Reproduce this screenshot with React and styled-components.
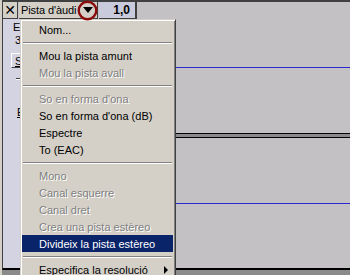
import React from "react";
import styled, { createGlobalStyle } from "styled-components";

const GlobalStyle = createGlobalStyle`
  html, body {
    margin: 0;
    padding: 0;
    background: #d4d0c8;
  }
  body {
    font-family: "Liberation Sans", Arial, sans-serif;
    font-size: 11px;
  }
`;

const Window = styled.div`
  position: relative;
  width: 350px;
  height: 275px;
  overflow: hidden;
  background: #d4d0c8;
  display: flex;
  flex-direction: column;
  padding-left: 2px;
  box-sizing: border-box;
`;

const Track = styled.div`
  display: flex;
  height: 270px;
  flex-shrink: 0;
  border-top: 2px solid #404040;
  border-left: 1px solid #404040;
  border-bottom: 2px solid #000;
  box-sizing: border-box;
`;

const Under = styled.div`
  flex: 1;
  background: #8a8a8a;
`;

const Label = styled.div`
  width: 133px;
  flex-shrink: 0;
  display: flex;
  flex-direction: column;
  background: #d3d3e2;
  border-right: 1px solid #404040;
`;

const TitleBar = styled.div`
  display: flex;
  height: 17px;
  gap: 1px;
  background: #c6c3c6;
`;

const Bevel = styled.div`
  box-sizing: border-box;
  display: flex;
  align-items: center;
  background: ${(p) => p.$bg || "#d4d0c8"};
  border-right: 1px solid #404040;
  border-bottom: 1px solid #404040;
  color: #000;
`;

const CloseBox = styled(Bevel)`
  width: 15px;
  justify-content: center;
  font-size: 14px;
  font-family: "DejaVu Sans", sans-serif;
`;

const TitleBox = styled(Bevel)`
  width: 79px;
  padding-left: 2px;
  font-size: 11px;
  letter-spacing: -0.1px;
  white-space: nowrap;
`;

const Caret = styled.svg`
  margin-left: auto;
  margin-right: 4px;
  flex-shrink: 0;
`;

const RateBox = styled(Bevel)`
  width: 37px;
  justify-content: flex-end;
  padding-right: 5px;
  font-size: 12px;
  font-weight: bold;
`;

const LabelBody = styled.div`
  display: flex;
  flex-direction: column;
  padding: 2px 0 0 10px;
`;

const InfoLine = styled.div`
  line-height: 13px;
  padding-left: ${(p) => p.$indent || 0}px;
  white-space: nowrap;
`;

const ButtonRow = styled.div`
  display: flex;
  gap: 6px;
  margin-top: 6px;
  margin-left: -2px;
`;

const SmallButton = styled.div`
  height: 15px;
  box-sizing: border-box;
  padding: 0 3px;
  display: flex;
  align-items: center;
  text-decoration: underline;
  border-left: 1px solid #fff;
  border-top: 1px solid #fff;
  border-right: 1px solid #404040;
  border-bottom: 1px solid #404040;
`;

const SliderTrack = styled.div`
  margin-top: ${(p) => p.$top}px;
  margin-left: 3px;
  width: 100px;
  height: 0;
  border-top: 1px solid #404040;
  border-bottom: 1px solid #fff;
`;

const PanLabel = styled.div`
  margin-top: 26px;
  margin-left: 4px;
  text-decoration: underline;
  line-height: 13px;
`;

const Waves = styled.div`
  flex: 1;
  display: flex;
  flex-direction: column;
`;

const Channel = styled.div`
  height: ${(p) => (p.$h ? `${p.$h}px` : "auto")};
  flex: ${(p) => (p.$h ? "none" : 1)};
  display: flex;
  align-items: center;
  background: #c4c1c5;
`;

const ZeroLine = styled.div`
  flex: 1;
  height: 1px;
  background: #2b2bd6;
`;

const ChannelGap = styled.div`
  height: 5px;
  box-sizing: border-box;
  background: #8a8a8a;
  border-top: 1px solid #000;
  border-bottom: 1px solid #000;
`;

const Menu = styled.div`
  position: absolute;
  left: 20px;
  top: 19px;
  width: 156px;
  box-sizing: border-box;
  padding: 1px 2px 1px 1px;
  background: #d4d0c8;
  border: 1px solid;
  border-color: #d4d0c8 #404040 #404040 #d4d0c8;
  box-shadow: inset 1px 1px #fff, inset -1px -1px #808080;
`;

const Item = styled.div`
  height: 17px;
  display: flex;
  align-items: center;
  padding-left: 17px;
  white-space: nowrap;
  font-size: 11px;
  color: ${(p) => (p.$active ? "#fff" : p.$off ? "#808080" : "#000")};
  background: ${(p) => (p.$active ? "#0a246a" : "transparent")};
  text-shadow: ${(p) => (p.$off ? "1px 1px 0 #fff" : "none")};
`;

const SubArrow = styled.span`
  margin-left: auto;
  margin-right: 5px;
  width: 0;
  height: 0;
  border-top: 4px solid transparent;
  border-bottom: 4px solid transparent;
  border-left: 4px solid #000;
`;

const Separator = styled.div`
  height: 9px;
  display: flex;
  align-items: center;
  padding: 0 1px;
`;

const Rule = styled.div`
  flex: 1;
  border-top: 1px solid #808080;
  border-bottom: 1px solid #fff;
`;

const Callout = styled.svg`
  position: absolute;
  left: 77px;
  top: 0;
`;

const items = [
  { t: "Nom..." },
  "sep",
  { t: "Mou la pista amunt" },
  { t: "Mou la pista avall", off: true },
  "sep",
  { t: "So en forma d'ona", off: true },
  { t: "So en forma d'ona (dB)" },
  { t: "Espectre" },
  { t: "To (EAC)" },
  "sep",
  { t: "Mono", off: true },
  { t: "Canal esquerre", off: true },
  { t: "Canal dret", off: true },
  { t: "Crea una pista estèreo", off: true },
  { t: "Divideix la pista estèreo", active: true },
  "sep",
  { t: "Especifica la resolució", sub: true },
];

export default function App() {
  return (
    <>
      <GlobalStyle />
      <Window>
        <Track>
          <Label>
            <TitleBar>
              <CloseBox>✕</CloseBox>
              <TitleBox>
                Pista d'àudi
                <Caret width="10" height="6" viewBox="0 0 10 6">
                  <polygon points="0,0 10,0 5,6" fill="#000" />
                </Caret>
              </TitleBox>
              <RateBox $bg="#c9cbdc">1,0</RateBox>
            </TitleBar>
            <LabelBody>
              <InfoLine>Estèreo, 44100Hz</InfoLine>
              <InfoLine $indent={2}>32-bit float</InfoLine>
              <ButtonRow>
                <SmallButton>Silencia</SmallButton>
                <SmallButton>Solo</SmallButton>
              </ButtonRow>
              <SliderTrack $top={10} />
              <PanLabel>E</PanLabel>
            </LabelBody>
          </Label>
          <Waves>
            <Channel $h={131}>
              <ZeroLine />
            </Channel>
            <ChannelGap />
            <Channel>
              <ZeroLine />
            </Channel>
          </Waves>
        </Track>
        <Under />

        <Menu>
          {items.map((it, i) =>
            it === "sep" ? (
              <Separator key={i}>
                <Rule />
              </Separator>
            ) : (
              <Item key={i} $off={it.off} $active={it.active}>
                {it.t}
                {it.sub && <SubArrow />}
              </Item>
            )
          )}
        </Menu>

        <Callout width="22" height="22" viewBox="0 0 22 22">
          <circle cx="10.5" cy="10.5" r="8.8" fill="none" stroke="#8a0c0c" strokeWidth="2.4" />
        </Callout>
      </Window>
    </>
  );
}
